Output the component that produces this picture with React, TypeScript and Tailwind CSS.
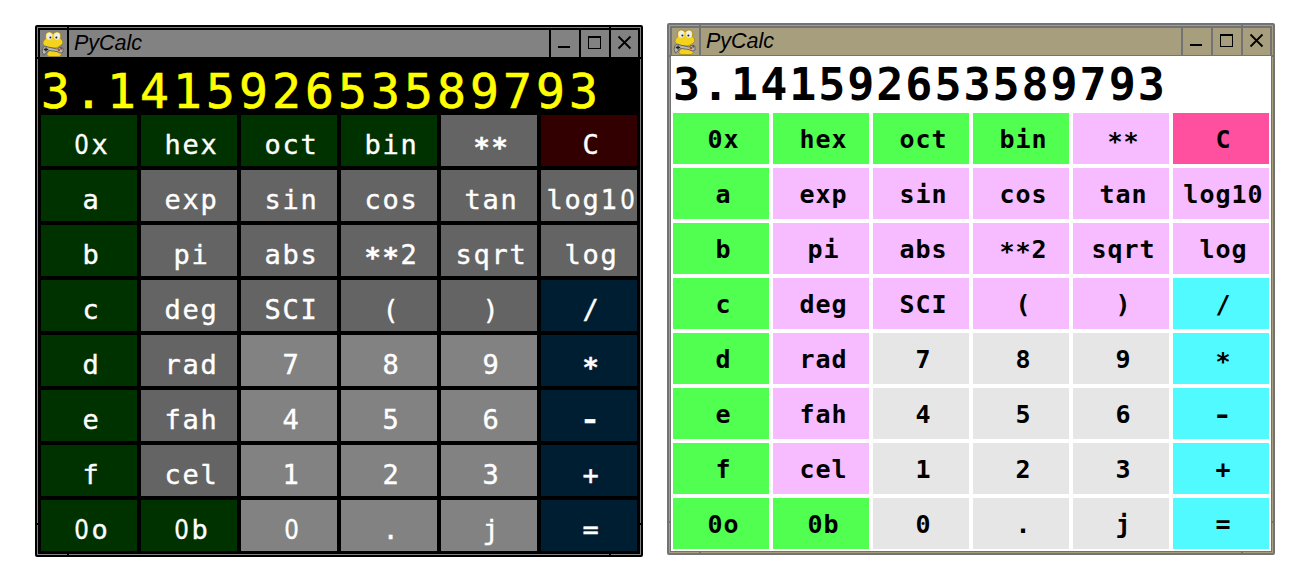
import React from "react";

type Kind = "base" | "fn" | "num" | "op" | "clear";
type Skin = "dark" | "light";

const rows: [string, Kind][][] = [
  [["0x", "base"], ["hex", "base"], ["oct", "base"], ["bin", "base"], ["**", "fn"], ["C", "clear"]],
  [["a", "base"], ["exp", "fn"], ["sin", "fn"], ["cos", "fn"], ["tan", "fn"], ["log10", "fn"]],
  [["b", "base"], ["pi", "fn"], ["abs", "fn"], ["**2", "fn"], ["sqrt", "fn"], ["log", "fn"]],
  [["c", "base"], ["deg", "fn"], ["SCI", "fn"], ["(", "fn"], [")", "fn"], ["/", "op"]],
  [["d", "base"], ["rad", "fn"], ["7", "num"], ["8", "num"], ["9", "num"], ["*", "op"]],
  [["e", "base"], ["fah", "fn"], ["4", "num"], ["5", "num"], ["6", "num"], ["-", "op"]],
  [["f", "base"], ["cel", "fn"], ["1", "num"], ["2", "num"], ["3", "num"], ["+", "op"]],
  [["0o", "base"], ["0b", "base"], ["0", "num"], [".", "num"], ["j", "num"], ["=", "op"]],
];

const keyColors: Record<Skin, Record<Kind, string>> = {
  dark: {
    base: "bg-[#003200]",
    fn: "bg-[#646464]",
    num: "bg-[#828282]",
    op: "bg-[#001e32]",
    clear: "bg-[#320000]",
  },
  light: {
    base: "bg-[#50ff50]",
    fn: "bg-[#f6bcff]",
    num: "bg-[#e6e6e6]",
    op: "bg-[#50faff]",
    clear: "bg-[#ff50a0]",
  },
};

function Snake() {
  return (
    <svg width="24" height="26" viewBox="0 0 24 26">
      <path d="M8 15 Q10 18 7 21 Q4 25 9 25.5 L18 25.5 Q22 24 19 21 L15 20 Q19 17 17 14Z" fill="#f4d31f" stroke="#8f7a14" strokeWidth=".6" />
      <path d="M4.5 8 Q3.5 1 8 1 Q11.5 1 12 3 Q13 1 16.5 1 Q21 1.5 19.5 7.5 Q22.5 10 21.5 12.5 Q18 17 12 17 Q4 17 2 13 Q1.5 10 4.5 8Z" fill="#f4d31f" stroke="#8f7a14" strokeWidth=".6" />
      <ellipse cx="8.3" cy="5.2" rx="2.9" ry="3.6" fill="#eee" />
      <ellipse cx="16" cy="5.2" rx="2.9" ry="3.6" fill="#eee" />
      <circle cx="9.4" cy="6.6" r="1" fill="#222" />
      <circle cx="15.4" cy="6.6" r="1" fill="#222" />
      <path d="M2 16.5 Q4 14 7 16 L16 18 Q21 14.5 22 18 Q23 22 20 22 Q18 22 16 20.5 L8 19.5 Q5 22 2.5 24 Q0 21 2 16.5Z" fill="#b9b9b4" stroke="#4f4f4f" strokeWidth=".8" />
      <path d="M2.8 18.5h4.4M5 16.4v4.2" stroke="#222" strokeWidth="1.3" />
      <circle cx="18" cy="19" r="1.3" fill="#b44" />
      <circle cx="20.3" cy="17.6" r="1.1" fill="#744" />
    </svg>
  );
}

function TitleBar({ skin }: { skin: Skin }) {
  const dark = skin === "dark";
  const fill = dark ? "bg-[#828282]" : "bg-[#a69e7d]";
  const line = dark ? "bg-black" : "bg-[#737373]";
  return (
    <div className={`flex h-[29px] gap-x-0.5 px-px pt-px pb-px ${line}`}>
      <div className={`flex w-[27px] items-center justify-center pr-px ${fill}`}>
        <Snake />
      </div>
      <div className={`flex-1 pl-[5px] font-['Liberation_Sans',sans-serif] text-[21.5px] leading-[27px] text-black italic ${fill}`}>
        PyCalc
      </div>
      <div className={`w-7 ${fill}`}>
        <svg width="28" height="27"><path d="M7 17h12" stroke="#000" strokeWidth="2" /></svg>
      </div>
      <div className={`w-7 ${fill}`}>
        <svg width="28" height="27"><path d="M7.5 6.5h12v12h-12zM7 7.5h13" fill="none" stroke="#000" shapeRendering="crispEdges" /></svg>
      </div>
      <div className={`w-[27px] ${fill}`}>
        <svg width="27" height="27"><path d="M7.5 6.5l12 12M19.5 6.5l-12 12" stroke="#000" strokeWidth="1.8" /></svg>
      </div>
    </div>
  );
}

function Label({ text, skin }: { text: string; skin: Skin }) {
  const dark = skin === "dark";
  return (
    <>
      {text.split("").map((ch, i) => {
        if (ch === "*")
          return (
            <span key={i} className={dark ? "align-[-3px] font-bold" : "align-[-2px]"}>
              *
            </span>
          );
        if (ch === "-")
          return (
            <span key={i} className={dark ? "inline-block scale-x-120 font-bold" : "inline-block scale-x-130 font-bold"}>
              -
            </span>
          );
        if (ch === "0" && dark)
          return (
            <span key={i} className="inline-block w-[18px] scale-x-85 font-['DejaVu_Sans',sans-serif]">
              0
            </span>
          );
        return <React.Fragment key={i}>{ch}</React.Fragment>;
      })}
    </>
  );
}

/* Notches where the resize handles cut through the frame's inner line. */
function FrameNotches({ skin }: { skin: Skin }) {
  const color = skin === "dark" ? "bg-black" : "bg-[#737373]";
  return (
    <>
      <i className={`absolute top-0 left-[30px] h-px w-0.5 ${color}`} />
      <i className={`absolute top-0 right-[30px] h-px w-0.5 ${color}`} />
      <i className={`absolute bottom-0 left-[30px] h-px w-0.5 ${color}`} />
      <i className={`absolute right-[30px] bottom-0 h-px w-0.5 ${color}`} />
      <i className={`absolute top-[30px] left-0 h-0.5 w-px ${color}`} />
      <i className={`absolute top-[30px] right-0 h-0.5 w-px ${color}`} />
      <i className={`absolute bottom-[30px] left-0 h-0.5 w-px ${color}`} />
      <i className={`absolute right-0 bottom-[30px] h-0.5 w-px ${color}`} />
    </>
  );
}

function Calculator({ skin }: { skin: Skin }) {
  const dark = skin === "dark";
  return (
    <section
      className={`relative h-[532px] w-[608px] rounded-[2px] border-2 ${dark ? "mt-[25px] border-black" : "mt-[23px] border-[#737373]"}`}
    >
      <div className={`h-full border ${dark ? "border-[#828282]" : "border-[#a69e7d]"}`}>
        <div className={`flex h-full flex-col border ${dark ? "border-black bg-black" : "border-[#737373] bg-white"}`}>
          <TitleBar skin={skin} />
          <div
            className={
              dark
                ? "h-[57px] pl-[2px] font-['DejaVu_Sans_Mono',monospace] text-[48px] leading-[67px] tracking-[4.1px] text-[#ffff00] [-webkit-text-stroke:0.7px_#ffff00]"
                : "h-[57px] pl-[2px] font-['DejaVu_Sans_Mono',monospace] text-[45px] leading-[57px] font-bold tracking-[1.95px] text-black"
            }
          >
            3.141592653589793
          </div>
          <div className="grid grid-cols-[repeat(6,96px)] grid-rows-[repeat(8,51px)] gap-1 px-[2px]">
            {rows.flat().map(([text, kind]) => (
              <button
                key={text}
                className={`flex items-start justify-center overflow-hidden whitespace-nowrap ${keyColors[skin][kind]} ${
                  dark
                    ? "pl-[5px] font-['DejaVu_Sans_Mono',monospace] text-[27px] leading-[59px] tracking-[1.75px] text-white [-webkit-text-stroke:0.4px_white]"
                    : "pl-[5px] font-['DejaVu_Sans_Mono',monospace] text-[25px] leading-[54px] font-bold tracking-[1px] text-black"
                }`}
              >
                <span className="shrink-0">
                  <Label text={text} skin={skin} />
                </span>
              </button>
            ))}
          </div>
        </div>
      </div>
      <FrameNotches skin={skin} />
    </section>
  );
}

export default function App() {
  return (
    <main className="flex h-[582px] w-[1307px] items-start gap-6 overflow-hidden bg-white pl-[35px]">
      <Calculator skin="dark" />
      <Calculator skin="light" />
    </main>
  );
}
